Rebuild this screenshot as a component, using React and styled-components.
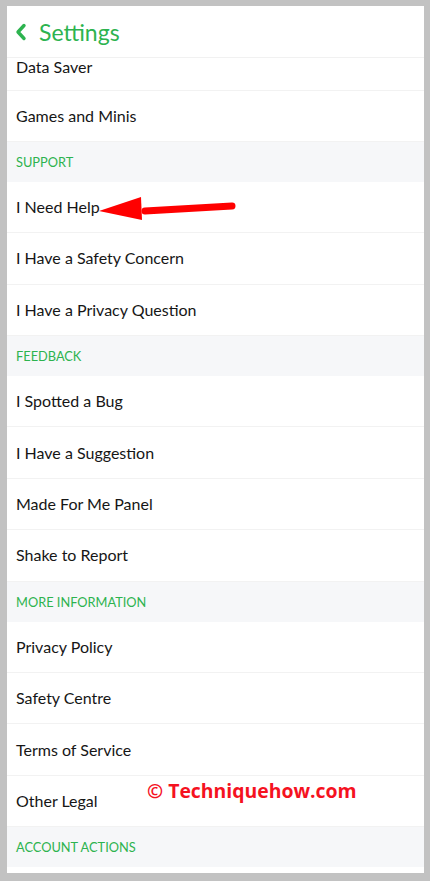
import React from "react"
import styled, { createGlobalStyle } from "styled-components"

const GlobalStyle = createGlobalStyle`
  html, body {
    margin: 0;
    padding: 0;
    background: #c2c2c2;
  }
  * {
    box-sizing: border-box;
  }
`

const Frame = styled.div`
  width: 430px;
  height: 881px;
  padding: 6px 6px 8px 7px;
  background: #c2c2c2;
`
const Screen = styled.div`
  position: relative;
  display: flex;
  flex-direction: column;
  width: 100%;
  height: 100%;
  background: #ffffff;
  overflow: hidden;
  font-family: Lato, "Open Sans", sans-serif;
`
const Header = styled.div`
  display: flex;
  align-items: center;
  gap: 11px;
  height: 52px;
  padding-left: 7px;
  border-bottom: 1px solid #f1f1f1;
  flex-shrink: 0;
`
const Title = styled.div`
  font-size: 23px;
  font-weight: 400;
  color: #2db34f;
`
const List = styled.div`
  flex: 1;
  overflow: hidden;
`
const Row = styled.div`
  display: flex;
  align-items: ${(p) => (p.$partial ? "flex-start" : "center")};
  height: ${(p) => (p.$partial ? "32.5px" : "51.4px")};
  padding-left: 9px;
  font-size: 16px;
  line-height: ${(p) => (p.$partial ? "17px" : "20px")};
  color: #161616;
  border-bottom: 1px solid #f2f2f2;
`
const SectionHeader = styled.div`
  display: flex;
  align-items: center;
  height: 40px;
  padding-left: 9px;
  background: #f6f7f9;
  font-size: 12.8px;
  color: #2db34f;
`
const Arrow = styled.svg`
  position: absolute;
  left: 92px;
  top: 188px;
`
const Watermark = styled.div`
  position: absolute;
  left: 140px;
  top: 771px;
  font-family: "Open Sans", sans-serif;
  font-weight: 700;
  font-size: 19.4px;
  color: #f5121f;
`

const sections = [
  { items: ["Data Saver", "Games and Minis"] },
  {
    title: "SUPPORT",
    items: ["I Need Help", "I Have a Safety Concern", "I Have a Privacy Question"],
  },
  {
    title: "FEEDBACK",
    items: ["I Spotted a Bug", "I Have a Suggestion", "Made For Me Panel", "Shake to Report"],
  },
  {
    title: "MORE INFORMATION",
    items: ["Privacy Policy", "Safety Centre", "Terms of Service", "Other Legal"],
  },
  { title: "ACCOUNT ACTIONS", items: [] },
]

const BackIcon = () => (
  <svg width="14" height="18" viewBox="0 0 14 18">
    <path
      d="M10 2.5 L4 9 L10 15.5"
      fill="none"
      stroke="#2db34f"
      strokeWidth="3.4"
      strokeLinecap="round"
      strokeLinejoin="round"
    />
  </svg>
)

const App = () => {
  return (
    <Frame>
      <GlobalStyle />
      <Screen>
        <Header>
          <BackIcon />
          <Title>Settings</Title>
        </Header>
        <List>
          {sections.map((s, i) => (
            <div key={i}>
              {s.title && <SectionHeader>{s.title}</SectionHeader>}
              {s.items.map((item, j) => (
                <Row key={item} $partial={i === 0 && j === 0}>
                  {item}
                </Row>
              ))}
            </div>
          ))}
        </List>
        <Arrow width="140" height="40" viewBox="0 0 140 40">
          <path d="M133 12 L46 17" stroke="#ff0000" strokeWidth="7" strokeLinecap="round" />
          <polygon points="0,17 42,3 43,26" fill="#ff0000" />
        </Arrow>
        <Watermark>© Techniquehow.com</Watermark>
      </Screen>
    </Frame>
  )
}

export default App
